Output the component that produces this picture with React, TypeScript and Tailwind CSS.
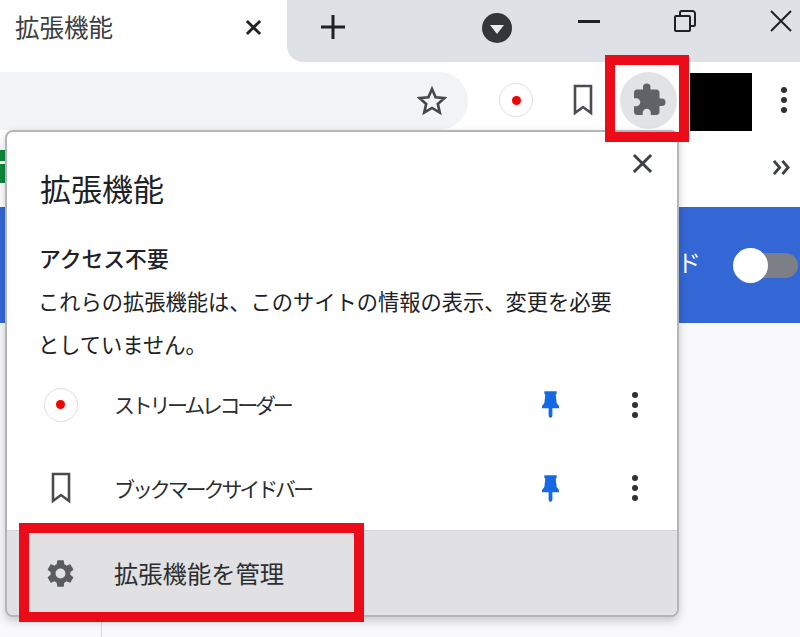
import { MdExtension, MdSettings } from 'react-icons/md'

const jp = "font-['Noto_Sans_CJK_JP',sans-serif]"

function Pin() {
  return (
    <svg viewBox="0 0 18 28" className="h-[27px] w-[17px] fill-[#1469e6]" aria-hidden>
      <path d="M2.500 0h13v3l-1 .5 1 9 2.500 3V18H11v8a2 2 0 0 1-4 0v-8H0v-2.500l2.500-3 1-9-1-.5z" />
    </svg>
  )
}

function Dots({ className = '' }: { className?: string }) {
  return (
    <div className={`flex flex-col items-center gap-[4px] ${className}`}>
      <span className="size-[6px] rounded-full bg-[#303134]" />
      <span className="size-[6px] rounded-full bg-[#303134]" />
      <span className="size-[6px] rounded-full bg-[#303134]" />
    </div>
  )
}

function Bookmark({ className = '' }: { className?: string }) {
  return (
    <svg viewBox="0 0 20 32" className={`fill-none stroke-[#4a4c50] stroke-[2.6] ${className}`} aria-hidden>
      <path d="M2 2h16v27l-8-6-8 6z" />
    </svg>
  )
}

function RecordIcon() {
  return (
    <div className="flex size-[34px] items-center justify-center rounded-full border border-[#dedede] bg-white">
      <span className="size-[9px] rounded-full bg-[#f00000]" />
    </div>
  )
}

function ExtensionRow({ icon, label, track }: { icon: React.ReactNode; label: string; track: string }) {
  return (
    <div className="flex h-[84px] items-center">
      <div className="flex w-[107px] justify-center">{icon}</div>
      <span className={`flex-1 text-[21px] leading-none text-[#2c2e31] ${track}`}>{label}</span>
      <Pin />
      <Dots className="mr-[39px] ml-[73px]" />
    </div>
  )
}

export default function App() {
  return (
    <div className={`relative flex h-[637px] w-[800px] flex-col overflow-hidden bg-[#f9f9fb] ${jp}`}>
      <header className="relative h-[131px] shrink-0 bg-white">
        <div className="flex h-[62px]">
          <div className="relative flex h-[62px] w-[287px] items-center pb-[8px] pl-[15px]">
            <span className="text-[24.5px] leading-none text-[#3c4043] [font-feature-settings:'palt']">拡張機能</span>
            <svg viewBox="0 0 18 18" className="absolute top-[19px] left-[245px] size-[17px] fill-none stroke-[#202124] stroke-[3]" aria-hidden>
              <path d="M2 2l14 14M16 2L2 16" />
            </svg>
          </div>
          <div className="flex flex-1 rounded-bl-[16px] bg-[#dee1e6]">
            <svg viewBox="0 0 26 26" className="mt-[14px] ml-[33px] size-[26px] fill-none stroke-[#202124] stroke-[3]" aria-hidden>
              <path d="M13 1v24M1 13h24" />
            </svg>
            <div className="mt-[13px] ml-[136px] flex size-[30px] items-center justify-center rounded-full bg-[#35363a]">
              <span className="mt-[3px] border-x-[7px] border-t-[9px] border-x-transparent border-t-[#e8eaed]" />
            </div>
            <span className="mt-[20px] ml-[66px] h-[3px] w-[22px] bg-[#202124]" />
            <svg viewBox="0 0 22 22" className="mt-[10px] ml-[74px] size-[22px] fill-none stroke-[#202124] stroke-[2]" aria-hidden>
              <rect x="1" y="6" width="15" height="15" rx="1" />
              <path d="M6 6V2.500A1.500 1.500 0 0 1 7.500 1h11A2.500 2.500 0 0 1 21 3.500V14.500A1.500 1.500 0 0 1 19.500 16H16" />
            </svg>
            <svg viewBox="0 0 22 22" className="mt-[10px] ml-[74px] size-[22px] fill-none stroke-[#202124] stroke-2" aria-hidden>
              <path d="M1 1l20 20M21 1L1 21" />
            </svg>
          </div>
        </div>
        <div className="flex h-[69px] items-center pt-[7px]">
          <div className="mb-[1px] flex h-[58px] w-[468px] items-center justify-end self-end rounded-r-[29px] bg-[#f1f3f4] pr-[21px]">
            <svg viewBox="0 0 30 30" className="size-[30px] fill-none stroke-[#44464a] stroke-[2.6]" aria-hidden>
              <path d="M15 3l3.600 8.200 8.900.800-6.700 5.900 2 8.700-7.800-4.600-7.800 4.600 2-8.700L2.500 12l8.900-.800z" />
            </svg>
          </div>
          <div className="ml-[31px]">
            <RecordIcon />
          </div>
          <Bookmark className="ml-[40px] h-[34px] w-[20px]" />
          <div className="ml-[27px] flex size-[57px] items-center justify-center rounded-full bg-[#e2e3e5]">
            <MdExtension className="size-[36px] text-[#5f6368]" />
          </div>
          <div className="mt-[4px] ml-[13px] h-[59px] w-[62px] bg-black" />
          <Dots className="ml-[29px]" />
        </div>
      </header>

      <div className="relative h-[76px] shrink-0 bg-white">
        <div className="mt-[19px] flex w-[5px] flex-col gap-[3px]">
          <span className="h-[11px] bg-[#0d8a3c]" />
          <span className="h-[19px] bg-[#0d8a3c]" />
        </div>
        <svg viewBox="0 0 20 18" className="absolute top-[28px] right-[9px] h-[17px] w-[19px] fill-none stroke-[#3c4043] stroke-[3]" aria-hidden>
          <path d="M2 2l6 7-6 7M11 2l6 7-6 7" />
        </svg>
      </div>

      <div className="flex h-[116px] shrink-0 items-center justify-end bg-[#3367d6] pr-[2px] text-white">
        <span className="mr-[47px] mb-[6px] text-[24px] leading-none">ド</span>
        <div className="relative h-[25px] w-[50px] rounded-full bg-[#7c7f85]">
          <span className="absolute top-[-5px] left-[-15px] size-[35px] rounded-full bg-white" />
        </div>
      </div>

      <div className="flex flex-1">
        <div className="w-[102px] border-r border-[#d6d6d8] bg-[#f9f9fb]" />
      </div>

      <section className="absolute top-[130px] left-[5px] flex h-[487px] w-[674px] flex-col rounded-[8px] border-2 border-[#b4b5b7] bg-white shadow-[0_4px_10px_rgba(0,0,0,0.2)]">
        <div className="relative h-[185px] shrink-0 pt-[40px] pl-[31px]">
          <h2 className="ml-[2px] text-[31px] leading-none font-normal text-[#202124]">拡張機能</h2>
          <svg viewBox="0 0 22 22" className="absolute top-[21px] left-[625px] size-[21px] fill-none stroke-[#3c4043] stroke-[3]" aria-hidden>
            <path d="M2 2l18 18M20 2L2 20" />
          </svg>
          <h3 className="mt-[44px] ml-[1px] text-[21.800px] leading-none font-medium text-[#202124]">アクセス不要</h3>
          <p className="mt-[10px] w-[590px] text-[21.250px] leading-[43px] text-[#202124]">
            これらの拡張機能は、このサイトの情報の表示、変更を必要としていません。
          </p>
        </div>
        <div className="mt-[46px] flex h-[167px] flex-col">
          <ExtensionRow icon={<RecordIcon />} label="ストリームレコーダー" track="tracking-[-3.300px]" />
          <ExtensionRow icon={<Bookmark className="h-[32px] w-[20px]" />} label="ブックマークサイドバー" track="tracking-[-3.100px]" />
        </div>
        <div className="flex flex-1 items-center rounded-b-[6px] border-t border-[#d5d5d7] bg-[#e1e1e3]">
          <div className="flex w-[107px] justify-center">
            <MdSettings className="size-[33px] text-[#5a5c60]" />
          </div>
          <span className="text-[24.300px] leading-none text-[#2c2e31]">拡張機能を管理</span>
        </div>
      </section>

      <div className="absolute top-[55px] left-[605px] h-[87px] w-[84px] border-[10px] border-[#ec0b18]" />
      <div className="absolute top-[523px] left-[19px] h-[99px] w-[345px] border-[10px] border-[#ec0b18]" />
    </div>
  )
}
